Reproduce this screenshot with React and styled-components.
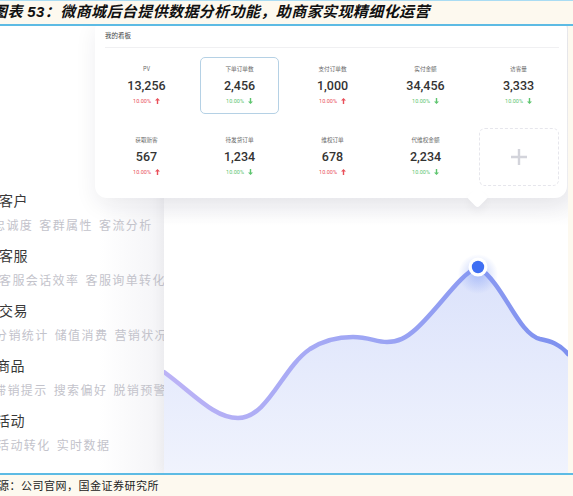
import React from 'react'
import styled, { createGlobalStyle } from 'styled-components'

const GlobalStyle = createGlobalStyle`
  html, body {
    margin: 0;
    padding: 0;
    background: #fdf9ef;
  }
  * { box-sizing: border-box; }
`

const Page = styled.div`
  width: 573px;
  height: 496px;
  overflow: hidden;
  background: #fdf9ef;
  font-family: "Noto Sans CJK SC", "Noto Sans", sans-serif;
  display: flex;
  flex-direction: column;
`

const Caption = styled.div`
  height: 26px;
  flex: none;
  border-top: 1px solid #a9dcf3;
  border-bottom: 2px solid #5dbbe4;
  padding-top: 1px;
  font-family: "Liberation Sans", "Noto Sans CJK SC", sans-serif;
  font-size: 15px;
  line-height: 20px;
  font-weight: 700;
  font-style: italic;
  letter-spacing: 0.4px;
  color: #111;
  text-indent: -8px;
  white-space: nowrap;
`

const Figure = styled.div`
  position: relative;
  height: 447px;
  width: 568px;
  flex: none;
  display: flex;
  overflow: hidden;
  background: #fff;
`

const Side = styled.div`
  width: 164px;
  flex: none;
  padding-top: 164px;
  display: flex;
  flex-direction: column;
  gap: 12px;
  background: linear-gradient(to right, #ffffff 60%, #f4f4f7 100%);
`

const Group = styled.div`
  display: flex;
  flex-direction: column;
  gap: 7px;
  white-space: nowrap;
`

const GroupTitle = styled.div`
  font-size: 14px;
  line-height: 20px;
  color: #383838;
  letter-spacing: 0.5px;
  text-indent: ${p => p.$shift}px;
`

const GroupItems = styled.div`
  font-size: 12px;
  line-height: 16px;
  color: #c3c3cb;
  letter-spacing: 1.4px;
  word-spacing: 2px;
  text-indent: ${p => p.$shift}px;
`

const ChartPanel = styled.div`
  flex: 1;
  position: relative;
  background: linear-gradient(to bottom, #ececef 0px, #f6f6f8 175px, #ffffff 200px);
  box-shadow: -4px 0 10px rgba(0, 0, 0, 0.04);
  svg { display: block; }
`

const Card = styled.div`
  position: absolute;
  left: 95px;
  top: -8px;
  width: 472px;
  height: 180px;
  background: #fff;
  border-radius: 12px;
  box-shadow: 0 8px 22px rgba(30, 30, 60, 0.07);
  z-index: 2;
`

const CardHead = styled.div`
  margin: 0 8px 0 10px;
  height: 30px;
  padding-top: 13px;
  border-bottom: 1px solid #f0f0f2;
  font-size: 6.5px;
  line-height: 8px;
  color: #444;
`

const Grid = styled.div`
  margin-top: 9px;
  padding: 0 2px 0 5px;
  display: grid;
  grid-template-columns: repeat(5, 93px);
  grid-auto-rows: 57px;
  row-gap: 14px;
`

const Cell = styled.div`
  justify-self: center;
  width: 79px;
  height: 57px;
  padding-top: 7px;
  border: 1.5px solid ${p => (p.$active ? '#b5d1e5' : 'transparent')};
  border-radius: 5px;
  display: flex;
  flex-direction: column;
  align-items: center;
`

const Label = styled.div`
  font-size: 5.6px;
  line-height: 8px;
  color: #666;
`

const Value = styled.div`
  margin-top: 5px;
  font-family: Roboto, "Liberation Sans", sans-serif;
  font-size: 12.5px;
  line-height: 16px;
  font-weight: 500;
  color: #333;
`

const Change = styled.div`
  margin-top: 3px;
  display: flex;
  align-items: center;
  gap: 4px;
  font-family: Roboto, sans-serif;
  font-size: 5.5px;
  line-height: 8px;
  color: ${p => (p.$up ? '#e9505a' : '#5ec56f')};
  svg { display: block; }
`

const AddCell = styled.div`
  justify-self: center;
  width: 80px;
  height: 58px;
  border: 1px dashed #e6e6ec;
  border-radius: 6px;
  display: flex;
  align-items: center;
  justify-content: center;
`

const Pointer = styled.div`
  position: absolute;
  left: 375px;
  bottom: -7px;
  width: 15px;
  height: 15px;
  background: #fff;
  border-radius: 3px;
  transform: rotate(45deg);
  box-shadow: 4px 4px 8px rgba(30, 30, 60, 0.04);
`

const Source = styled.div`
  flex: 1;
  border-top: 2px solid #5dbbe4;
  padding-top: 3px;
  font-family: "Liberation Serif", "Noto Sans CJK SC", serif;
  font-size: 11px;
  line-height: 16px;
  letter-spacing: 0.5px;
  color: #222;
  text-indent: -2px;
  white-space: nowrap;
`

const Arrow = ({ up }) =>
  up ? (
    <svg width="5" height="6" viewBox="0 0 5 6">
      <path d="M2.5 0 L5 2.6 L3.2 2.6 L3.2 6 L1.8 6 L1.8 2.6 L0 2.6 Z" fill="#e9505a" />
    </svg>
  ) : (
    <svg width="5" height="6" viewBox="0 0 5 6">
      <path d="M2.5 6 L5 3.4 L3.2 3.4 L3.2 0 L1.8 0 L1.8 3.4 L0 3.4 Z" fill="#5ec56f" />
    </svg>
  )

const stats = [
  { label: 'PV', value: '13,256', up: true },
  { label: '下单订单数', value: '2,456', up: false, active: true },
  { label: '支付订单数', value: '1,000', up: true },
  { label: '实付金额', value: '34,456', up: false },
  { label: '访客量', value: '3,333', up: false },
  { label: '获取新客', value: '567', up: true },
  { label: '待发货订单', value: '1,234', up: false },
  { label: '维权订单', value: '678', up: true },
  { label: '代维权金额', value: '2,234', up: false },
]

const groups = [
  { title: '客户', items: '忠诚度 客群属性 客流分析', t: -1, s: -7 },
  { title: '客服', items: '客服会话效率 客服询单转化', t: -1, s: -1 },
  { title: '交易', items: '分销统计 储值消费 营销状况', t: -1, s: -5 },
  { title: '商品', items: '滞销提示 搜索偏好 脱销预警', t: -4, s: -6 },
  { title: '活动', items: '活动转化 实时数据', t: -4, s: -3 },
]

const linePath =
  'M0,346 C30,368 50,392 74,392 C104,392 118,342 146,323 C160,314 175,311 189,311 ' +
  'C205,311 212,316 223,316 C234,316 242,312 252,303 C275,282 296,248 314,241 ' +
  'C340,258 354,308 376,313 C386,315 396,318 404,328'

const Chart = () => (
  <svg width="404" height="447" viewBox="0 0 404 447">
    <defs>
      <linearGradient id="area" x1="0" y1="0" x2="0" y2="1">
        <stop offset="0" stopColor="#dbe2fb" />
        <stop offset="1" stopColor="#f0f3fd" />
      </linearGradient>
      <linearGradient id="stroke" x1="0" y1="0" x2="1" y2="0">
        <stop offset="0" stopColor="#bcb3f6" />
        <stop offset="0.5" stopColor="#9ea6f4" />
        <stop offset="1" stopColor="#7d90ef" />
      </linearGradient>
      <radialGradient id="glow">
        <stop offset="0" stopColor="#6f8ff5" stopOpacity="0.45" />
        <stop offset="1" stopColor="#6f8ff5" stopOpacity="0" />
      </radialGradient>
    </defs>
    <path d={linePath + ' L404,447 L0,447 Z'} fill="url(#area)" />
    <path d={linePath} fill="none" stroke="url(#stroke)" strokeWidth="4.5" strokeLinecap="round" />
    <circle cx="314" cy="248" r="20" fill="url(#glow)" />
    <circle cx="314" cy="241" r="9.5" fill="#fff" />
    <circle cx="314" cy="241" r="6.2" fill="#3f6ff3" />
  </svg>
)

const App = () => {
  return (
    <Page>
      <GlobalStyle />
      <Caption>图表 53：微商城后台提供数据分析功能，助商家实现精细化运营</Caption>
      <Figure>
        <Side>
          {groups.map(g => (
            <Group key={g.title}>
              <GroupTitle $shift={g.t}>{g.title}</GroupTitle>
              <GroupItems $shift={g.s}>{g.items}</GroupItems>
            </Group>
          ))}
        </Side>
        <ChartPanel>
          <Chart />
        </ChartPanel>
        <Card>
          <CardHead>我的看板</CardHead>
          <Grid>
            {stats.map(s => (
              <Cell key={s.label} $active={s.active}>
                <Label>{s.label}</Label>
                <Value>{s.value}</Value>
                <Change $up={s.up}>
                  10.00%
                  <Arrow up={s.up} />
                </Change>
              </Cell>
            ))}
            <AddCell>
              <svg width="16" height="16" viewBox="0 0 16 16">
                <path d="M8 0 V16 M0 8 H16" stroke="#d3d4db" strokeWidth="2.4" />
              </svg>
            </AddCell>
          </Grid>
          <Pointer />
        </Card>
      </Figure>
      <Source>源：公司官网，国金证券研究所</Source>
    </Page>
  )
}

export default App
